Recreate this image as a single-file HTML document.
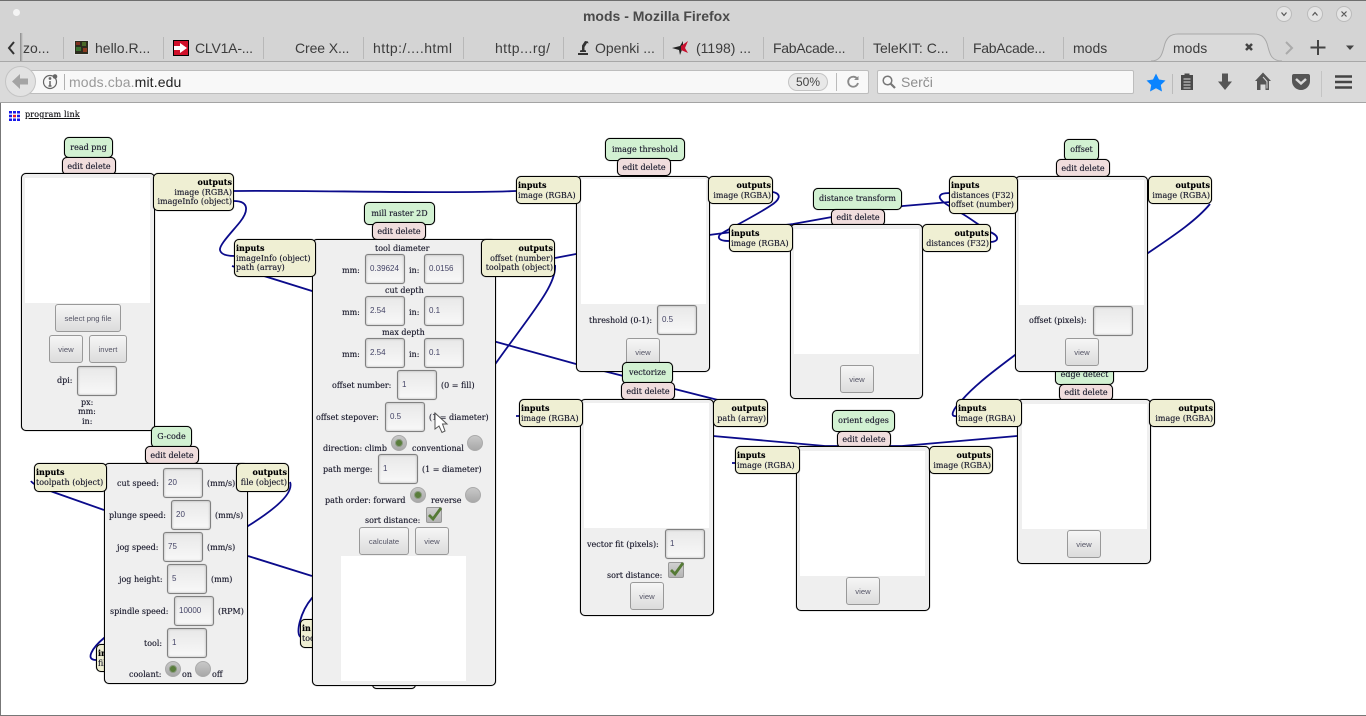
<!DOCTYPE html>
<html><head><meta charset="utf-8"><title>mods - Mozilla Firefox</title>
<style>
html,body{margin:0;padding:0;width:1366px;height:716px;overflow:hidden;background:#fff}
#r{position:relative;width:1366px;height:716px;overflow:hidden;background:#fff}
#r div,#r span.a,#r svg{position:absolute}
.c{font:14px/18px "Liberation Sans",sans-serif;color:#3c3c3c;white-space:nowrap;position:absolute}
.b{box-sizing:border-box;border:1px solid #000;border-radius:5px;box-shadow:0 0 .7px #000}
.m{background:#efefef}.ti{background:#d2f1d2;text-align:center}.ed{background:#f0dddd;text-align:center}
.io{background:#efefd3;font:8px/9.6px "DejaVu Serif",serif;color:#223;padding:4px 1px 0;white-space:nowrap;text-shadow:0 0 .4px #334}
.io b{color:#000}.o{text-align:right}
.ti,.ed{font:8px/19px "DejaVu Serif",serif;color:#223;white-space:nowrap;text-shadow:0 0 .4px #334}
.w{background:#fff}
.t{font:8px/10px "DejaVu Serif",serif;color:#223;white-space:nowrap;position:absolute;margin-top:1px;text-shadow:0 0 .4px #334}
.in{box-sizing:border-box;width:40px;height:30px;border:1px solid #808080;border-radius:3px;background:linear-gradient(#e8e8e8,#f8f8f8);font:8px/28px "Liberation Sans",sans-serif;color:#446;padding-left:4px;box-shadow:inset 0 0 2px #aaa,0 0 .6px #777}
.bt{box-sizing:border-box;height:28px;border:1px solid #999;border-radius:3px;background:linear-gradient(#f6f6f6,#dcdcdc);font:7.7px/28px "Liberation Sans",sans-serif;color:#556;text-align:center;white-space:nowrap}
.ra{box-sizing:border-box;width:16px;height:16px;border-radius:50%;border:1px solid #aaa;background:linear-gradient(#c8c8c8,#a8a8a8)}
.ra.on:after{content:"";position:absolute;left:3px;top:3px;width:8px;height:8px;border-radius:50%;background:#5a7d3c;border:1px solid #8a9a80;box-sizing:border-box}
.ck{box-sizing:border-box;width:16px;height:16px;border-radius:2px;border:1px solid #999;background:linear-gradient(#d0d0d0,#b4b4b4)}
</style></head><body><div id="r">

<!-- chrome -->
<div style="left:0;top:0;width:1366px;height:103px;background:#d4d4d4"></div>
<div style="left:0;top:0;width:1366px;height:1px;background:#6e6e6e"></div>
<div style="left:0;top:62px;width:1366px;height:40px;background:#dadada"></div>
<div style="left:0;top:61px;width:1366px;height:1px;background:#a8a8a8"></div>
<div style="left:0;top:102px;width:1366px;height:1px;background:#a4a4a4"></div>
<div style="left:13px;top:9px;width:7px;height:7px;border-radius:50%;background:#f4f4f4"></div>
<div class="c" style="left:0;width:1313px;top:7px;text-align:center;font-weight:bold;font-size:14px;color:#4a4a4a">mods - Mozilla Firefox</div>

<div style="left:1276px;top:6px;width:16px;height:16px;border-radius:50%;background:#e4e4e4;border:1px solid #bbb;box-sizing:border-box"></div>
<div style="left:1307px;top:6px;width:16px;height:16px;border-radius:50%;background:#e4e4e4;border:1px solid #bbb;box-sizing:border-box"></div>
<div style="left:1336px;top:6px;width:16px;height:16px;border-radius:50%;background:#e4e4e4;border:1px solid #bbb;box-sizing:border-box"></div>
<svg style="left:1276px;top:6px" width="80" height="16" fill="none" stroke="#555" stroke-width="1.2"><path d="M5.5 6.5L8 9.5L10.500 6.5M36.500 9.500L39 6.500L41.500 9.500M65.500 5.500L70.500 10.500M70.500 5.500L65.500 10.500"/></svg>

<!-- tab strip -->
<svg style="left:0;top:33px" width="1366" height="30">
<path d="M1151 28C1160 28 1162 22 1164 14C1166 5 1170 1 1178 1H1254C1262 1 1266 5 1268 14C1270 22 1272 28 1282 28" fill="#dadada" stroke="#a8a8a8"/>
<g fill="#b8b8b8"><rect x="63" y="4" width="1" height="22"/><rect x="163" y="4" width="1" height="22"/><rect x="263" y="4" width="1" height="22"/><rect x="363" y="4" width="1" height="22"/><rect x="463" y="4" width="1" height="22"/><rect x="563" y="4" width="1" height="22"/><rect x="663" y="4" width="1" height="22"/><rect x="763" y="4" width="1" height="22"/><rect x="863" y="4" width="1" height="22"/><rect x="963" y="4" width="1" height="22"/><rect x="1063" y="4" width="1" height="22"/></g>
<path d="M14 9L9 15L14 21" fill="none" stroke="#333" stroke-width="2"/>
<path d="M1286 9L1292 15L1286 21" fill="none" stroke="#aaa" stroke-width="2"/>
<path d="M1318 7V22M1310.500 14.500H1325.500" stroke="#444" stroke-width="2"/>
<path d="M1346 12.500H1354L1350 17Z" fill="#444"/>
<path d="M1246 11L1252 17M1252 11L1246 17" stroke="#444" stroke-width="2.500"/>
</svg>
<div style="left:20px;top:33px;width:3px;height:28px;background:linear-gradient(90deg,#8a8a8a,#d4d4d4)"></div>

<span class="c" style="left:23px;top:39px">zo...</span>
<div style="left:74px;top:40px;width:15px;height:15px;box-sizing:border-box;background:#2c2c1e;border:1px solid #ddd"></div>
<div style="left:76px;top:42px;width:4px;height:3px;background:#803020"></div><div style="left:82px;top:42px;width:4px;height:4px;background:#4a6a28"></div><div style="left:76px;top:47px;width:5px;height:4px;background:#3a7030"></div><div style="left:83px;top:48px;width:4px;height:4px;background:#8a3a20"></div>
<span class="c" style="left:95px;top:39px">hello.R...</span>
<div style="left:173px;top:40px;width:16px;height:16px;background:#d0102a;border:1px solid #000;box-sizing:border-box"></div>
<svg style="left:173px;top:40px" width="16" height="16"><path d="M1 6H7V3L14 8L7 13V10H1Z" fill="#fff"/></svg>
<span class="c" style="left:195px;top:39px;letter-spacing:-.2px">CLV1A-...</span>
<span class="c" style="left:295px;top:39px;letter-spacing:-.1px">Cree X...</span>
<span class="c" style="left:373px;top:39px;letter-spacing:.45px">http:/....html</span>
<span class="c" style="left:495px;top:39px;letter-spacing:.4px">http...rg/</span>
<svg style="left:576px;top:40px" width="14" height="16"><path d="M2 15H12V13H2ZM4 12H10V10.500L8.500 10V7L11 3L12.500 3.500L12 1.500L9 1L6 5.500L6 10L4 10.500Z" fill="#333"/></svg>
<span class="c" style="left:595px;top:39px">Openki ...</span>
<svg style="left:672px;top:40px" width="17" height="16"><path d="M0 8L8 6L11 1L11 7L8 15L7 10Z" fill="#222"/><path d="M9 6L16 1L13 8L16 13L9 10Z" fill="#c8102e"/></svg>
<span class="c" style="left:696px;top:39px">(1198) ...</span>
<span class="c" style="left:773px;top:39px;letter-spacing:-.3px">FabAcade...</span>
<span class="c" style="left:873px;top:39px">TeleKIT: C...</span>
<span class="c" style="left:973px;top:39px;letter-spacing:-.3px">FabAcade...</span>
<span class="c" style="left:1073px;top:39px">mods</span>
<span class="c" style="left:1173px;top:39px">mods</span>

<!-- nav bar -->
<div style="left:20px;top:70px;width:849px;height:24px;box-sizing:border-box;background:#f8f8f8;border:1px solid #bdbdbd;border-radius:2px"></div>
<div style="left:5px;top:66px;width:31px;height:31px;box-sizing:border-box;border-radius:50%;background:#e2e2e2;border:1px solid #c4c4c4"></div>
<svg style="left:5px;top:66px" width="31" height="31"><path d="M7 15.500L15 8V12.500H23V18.500H15V23Z" fill="#a4a4a4"/></svg>
<svg style="left:42px;top:72px" width="18" height="20" fill="none" stroke="#666" stroke-width="1.200"><circle cx="8" cy="10" r="6.500"/><path d="M8 9V14M6.500 14H9.500" stroke-width="1.500"/><circle cx="8" cy="6.500" r=".8" fill="#666"/><circle cx="13" cy="4.500" r="2.300" fill="#666" stroke="none"/></svg>
<div style="left:64px;top:74px;width:1px;height:16px;background:#b0b0b0"></div>
<span class="c" style="left:69px;top:73px;color:#9a9a9a;letter-spacing:.12px">mods.cba.<span style="color:#222">mit.edu</span></span>
<div style="left:788px;top:73px;width:40px;height:18px;box-sizing:border-box;border-radius:9px;background:#e8e8e8;border:1px solid #c4c4c4;text-align:center;font:12px/16px 'Liberation Sans',sans-serif;color:#444">50%</div>
<div style="left:836px;top:73px;width:1px;height:18px;background:#bbb"></div>
<svg style="left:846px;top:75px" width="14" height="14" fill="none" stroke="#8a8a8a" stroke-width="1.800"><path d="M11 3.500A5 5 0 1 0 12 8"/><path d="M8 5H12.500V1Z" fill="#8a8a8a" stroke="none"/></svg>
<div style="left:877px;top:70px;width:257px;height:24px;box-sizing:border-box;background:#f8f8f8;border:1px solid #bdbdbd;border-radius:2px"></div>
<svg style="left:881px;top:74px" width="16" height="16" fill="none" stroke="#777" stroke-width="1.500"><circle cx="6.500" cy="6.500" r="4.300"/><path d="M9.500 9.500L14 14" stroke-width="2.200"/></svg>
<span class="c" style="left:901px;top:73px;color:#8e8e8e">Serči</span>

<svg style="left:1145px;top:70px" width="221" height="30">
<path d="M11 3.500L14 9.500L20.500 10.500L15.800 15L17 21.500L11 18.300L5 21.500L6.200 15L1.500 10.500L8 9.500Z" fill="#0a84ff"/>
<rect x="27" y="4" width="1" height="20" fill="#bbb"/>
<path d="M36 5H39.500V3.500H44.500V5H48V20H36Z" fill="#4a4a4a"/><path d="M38.500 9H45.500M38.500 12H45.500M38.500 15H45.500M38.500 18H45.500" stroke="#ddd"/>
<path d="M77 3.500H83V11.500H87L80 20L73 11.500H77Z" fill="#555"/>
<path d="M118 2.500L126 11H124V20H120.500V14.500H115.500V20H112V11H110Z" fill="#555"/><path d="M118 7L122 11.500V18.500" fill="none" stroke="#dadada" stroke-width="1"/>
<path d="M149 4H163C164.500 4 165 5 165 6V11C165 16 161 20 156 20C151 20 147 16 147 11V6C147 5 147.500 4 149 4Z" fill="#555"/><path d="M151 9L156 13.500L161 9" fill="none" stroke="#dadada" stroke-width="2.500"/>
<rect x="176" y="1" width="1" height="26" fill="#c4c4c4"/>
<path d="M190 6.500H207M190 12H207M190 17.500H207" stroke="#444" stroke-width="2.600"/>
</svg>

<!-- page -->
<div style="left:0;top:103px;width:1px;height:613px;background:#777"></div>
<div style="left:0;top:715px;width:1366px;height:1px;background:#777"></div>
<svg style="left:9px;top:111px" width="11" height="10"><path d="M0 0h3v2.500H0zM4 0h3v2.500H4zM8 0h3v2.500H8zM0 3.800h3v2.500H0zM8 3.800h3v2.500H8zM0 7.500h3v2.500H0zM4 7.500h3v2.500H4zM8 7.500h3v2.500H8z" fill="#1a1ae8"/><path d="M4 3.800h3v2.500H4z" fill="#e01a30"/></svg>
<span class="t" style="left:25px;top:109px;text-decoration:underline;color:#111;letter-spacing:.18px">program link</span>

<!-- wires -->
<svg style="left:0;top:0;z-index:0" width="1366" height="716" fill="none" stroke="#0b0b8b" stroke-width="1.800">
<path d="M234 191C300 190 450 194 516 191"/>
<path d="M234 201C250 201 248 212 240 222C232 232 219 245 220 250C221 255 228 256 235 256"/>
<path d="M232 266L312 291L576 364L718 400"/>
<path d="M555 258L576 254L709 235L793 224L832 217L903 206L950 202"/>
<path d="M773 192C782 194 780 200 770 206C758 214 735 226 724 232C716 236 717 241 729 241"/>
<path d="M990 242C999 242 1000 236 990 232C980 226 970 218 961 213C945 204 935 198 942 194C945 193 948 193 950 193"/>
<path d="M1210 204C1195 222 1170 238 1148 253L1015 355C995 370 975 385 962 400C952 410 950 417 956 416"/>
<path d="M713 436L825 446L902 446L1017 436"/>
<path d="M31 481C33 485 45 489 53 492L104 510M248 556L312 576"/>
<path d="M555 265C557 285 530 315 496 363L312 598C300 612 295 635 301 637"/>
<path d="M290 482C293 490 285 503 248 526L104 638C92 648 85 660 96 660"/>
<path d="M516 416H522M732 463H738"/>
</svg>

<!-- read png -->
<div class="b ti" style="left:64px;top:137px;width:49px;height:21px">read png</div>
<div class="b ed" style="left:62px;top:157px;width:54px;height:18px;line-height:18px">edit delete</div>
<div class="b m" style="left:21px;top:173px;width:134px;height:258px"></div>
<div class="w" style="left:25px;top:178px;width:125px;height:125px"></div>
<div class="bt" style="left:55px;top:304px;width:66px">select png file</div>
<div class="bt" style="left:49px;top:335px;width:34px">view</div>
<div class="bt" style="left:89px;top:335px;width:38px">invert</div>
<span class="t" style="left:57px;top:375px">dpi:</span>
<div class="in" style="left:77px;top:366px"></div>
<span class="t" style="left:81px;top:397px">px:</span>
<span class="t" style="left:78px;top:406px">mm:</span>
<span class="t" style="left:82px;top:416px">in:</span>
<div class="b io o" style="left:153px;top:173px;width:81px;height:38px"><b>outputs</b><br>image (RGBA)<br>imageInfo (object)</div>

<!-- hidden nodes -->
<div class="b io" style="left:96px;top:644px;width:20px;height:28px"><b>in</b><br>fil</div>
<div class="b io" style="left:300px;top:619px;width:20px;height:29px"><b>in</b><br>too</div>
<div class="b" style="left:372px;top:680px;width:44px;height:9px;background:#efefef"></div>

<!-- G-code -->
<div class="b ti" style="left:151px;top:426px;width:41px;height:22px">G-code</div>
<div class="b ed" style="left:145px;top:446px;width:54px;height:18px;line-height:18px">edit delete</div>
<div class="b m" style="left:104px;top:463px;width:144px;height:221px"></div>
<div class="b io" style="left:34px;top:463px;width:73px;height:29px"><b>inputs</b><br>toolpath (object)</div>
<div class="b io o" style="left:236px;top:463px;width:53px;height:29px"><b>outputs</b><br>file (object)</div>
<span class="t" style="left:117px;top:478px">cut speed:</span><div class="in" style="left:163px;top:468px">20</div><span class="t" style="left:207px;top:478px">(mm/s)</span>
<span class="t" style="left:109px;top:510px">plunge speed:</span><div class="in" style="left:171px;top:500px">20</div><span class="t" style="left:215px;top:510px">(mm/s)</span>
<span class="t" style="left:117px;top:542px">jog speed:</span><div class="in" style="left:163px;top:532px">75</div><span class="t" style="left:207px;top:542px">(mm/s)</span>
<span class="t" style="left:119px;top:574px">jog height:</span><div class="in" style="left:167px;top:564px">5</div><span class="t" style="left:211px;top:574px">(mm)</span>
<span class="t" style="left:110px;top:606px">spindle speed:</span><div class="in" style="left:174px;top:596px">10000</div><span class="t" style="left:218px;top:606px">(RPM)</span>
<span class="t" style="left:144px;top:638px">tool:</span><div class="in" style="left:167px;top:628px">1</div>
<span class="t" style="left:129px;top:669px">coolant:</span><div class="ra on" style="left:165px;top:661px"></div><span class="t" style="left:182px;top:669px">on</span><div class="ra" style="left:195px;top:661px"></div><span class="t" style="left:212px;top:669px">off</span>

<!-- mill raster -->
<div class="b ti" style="left:364px;top:202px;width:71px;height:23px;line-height:21px">mill raster 2D</div>
<div class="b ed" style="left:372px;top:222px;width:54px;height:18px;line-height:18px">edit delete</div>
<div class="b m" style="left:312px;top:239px;width:184px;height:447px"></div>
<div class="b io" style="left:234px;top:239px;width:82px;height:38px"><b>inputs</b><br>imageInfo (object)<br>path (array)</div>
<div class="b io o" style="left:481px;top:239px;width:74px;height:38px"><b>outputs</b><br>offset (number)<br>toolpath (object)</div>
<span class="t" style="left:375px;top:243px">tool diameter</span>
<span class="t" style="left:342px;top:265px">mm:</span><div class="in" style="left:365px;top:254px">0.39624</div><span class="t" style="left:409px;top:265px">in:</span><div class="in" style="left:424px;top:254px">0.0156</div>
<span class="t" style="left:385px;top:285px">cut depth</span>
<span class="t" style="left:342px;top:307px">mm:</span><div class="in" style="left:365px;top:296px">2.54</div><span class="t" style="left:409px;top:307px">in:</span><div class="in" style="left:424px;top:296px">0.1</div>
<span class="t" style="left:382px;top:327px">max depth</span>
<span class="t" style="left:342px;top:349px">mm:</span><div class="in" style="left:365px;top:338px">2.54</div><span class="t" style="left:409px;top:349px">in:</span><div class="in" style="left:424px;top:338px">0.1</div>
<span class="t" style="left:332px;top:380px">offset number:</span><div class="in" style="left:397px;top:370px">1</div><span class="t" style="left:441px;top:380px">(0 = fill)</span>
<span class="t" style="left:316px;top:412px">offset stepover:</span><div class="in" style="left:385px;top:402px">0.5</div><span class="t" style="left:429px;top:412px">(1 = diameter)</span>
<span class="t" style="left:323px;top:443px">direction: climb</span><div class="ra on" style="left:391px;top:435px"></div><span class="t" style="left:412px;top:443px">conventional</span><div class="ra" style="left:467px;top:435px"></div>
<span class="t" style="left:323px;top:464px">path merge:</span><div class="in" style="left:378px;top:454px">1</div><span class="t" style="left:422px;top:464px">(1 = diameter)</span>
<span class="t" style="left:325px;top:495px">path order: forward</span><div class="ra on" style="left:410px;top:487px"></div><span class="t" style="left:431px;top:495px">reverse</span><div class="ra" style="left:465px;top:487px"></div>
<span class="t" style="left:365px;top:515px">sort distance:</span><div class="ck" style="left:426px;top:507px"></div>
<svg style="left:426px;top:505px" width="18" height="18"><path d="M3 10L7 14L15 3" fill="none" stroke="#557a35" stroke-width="2.800"/></svg>
<div class="bt" style="left:359px;top:527px;width:50px">calculate</div>
<div class="bt" style="left:415px;top:527px;width:34px">view</div>
<div class="w" style="left:341px;top:556px;width:125px;height:125px"></div>
<svg style="left:432px;top:411px" width="18" height="24"><path d="M3 2L15 13H10.500L13 20L10 21.500L7 15L3 18Z" fill="#fff" stroke="#555" stroke-width="1"/></svg>

<!-- image threshold -->
<div class="b ti" style="left:605px;top:138px;width:80px;height:23px;line-height:21px">image threshold</div>
<div class="b ed" style="left:617px;top:158px;width:54px;height:18px;line-height:18px">edit delete</div>
<div class="b m" style="left:576px;top:176px;width:134px;height:196px"></div>
<div class="w" style="left:581px;top:179px;width:125px;height:125px"></div>
<span class="t" style="left:589px;top:315px">threshold (0-1):</span><div class="in" style="left:657px;top:305px">0.5</div>
<div class="bt" style="left:626px;top:338px;width:34px">view</div>
<div class="b io" style="left:516px;top:176px;width:65px;height:28px"><b>inputs</b><br>image (RGBA)</div>
<div class="b io o" style="left:708px;top:176px;width:65px;height:28px"><b>outputs</b><br>image (RGBA)</div>

<!-- distance transform -->
<div class="b ti" style="left:813px;top:188px;width:89px;height:22px;line-height:20px">distance transform</div>
<div class="b ed" style="left:831px;top:209px;width:54px;height:17px;line-height:15px">edit delete</div>
<div class="b m" style="left:790px;top:224px;width:133px;height:175px"></div>
<div class="w" style="left:794px;top:229px;width:125px;height:125px"></div>
<div class="bt" style="left:840px;top:365px;width:34px">view</div>
<div class="b io" style="left:729px;top:224px;width:64px;height:28px"><b>inputs</b><br>image (RGBA)</div>
<div class="b io o" style="left:922px;top:224px;width:69px;height:28px"><b>outputs</b><br>distances (F32)</div>

<!-- edge detect -->
<div class="b ti" style="left:1055px;top:364px;width:59px;height:21px;line-height:19px">edge detect</div>
<div class="b ed" style="left:1059px;top:384px;width:54px;height:17px;line-height:15px">edit delete</div>
<div class="b m" style="left:1017px;top:399px;width:134px;height:165px"></div>
<div class="w" style="left:1022px;top:404px;width:125px;height:125px"></div>
<div class="bt" style="left:1067px;top:530px;width:34px">view</div>
<div class="b io" style="left:956px;top:399px;width:66px;height:28px"><b>inputs</b><br>image (RGBA)</div>
<div class="b io o" style="left:1149px;top:399px;width:66px;height:28px"><b>outputs</b><br>image (RGBA)</div>

<!-- offset -->
<div class="b ti" style="left:1064px;top:139px;width:35px;height:22px;line-height:20px">offset</div>
<div class="b ed" style="left:1056px;top:159px;width:54px;height:18px;line-height:18px">edit delete</div>
<div class="b m" style="left:1015px;top:176px;width:133px;height:196px"></div>
<div class="w" style="left:1019px;top:180px;width:125px;height:125px"></div>
<span class="t" style="left:1029px;top:315px">offset (pixels):</span><div class="in" style="left:1093px;top:306px"></div>
<div class="bt" style="left:1065px;top:338px;width:34px">view</div>
<div class="b io" style="left:949px;top:176px;width:69px;height:38px"><b>inputs</b><br>distances (F32)<br>offset (number)</div>
<div class="b io o" style="left:1148px;top:176px;width:64px;height:28px"><b>outputs</b><br>image (RGBA)</div>

<!-- vectorize -->
<div class="b ti" style="left:622px;top:362px;width:51px;height:22px;line-height:20px">vectorize</div>
<div class="b ed" style="left:621px;top:382px;width:54px;height:18px;line-height:18px">edit delete</div>
<div class="b m" style="left:580px;top:399px;width:134px;height:217px"></div>
<div class="w" style="left:584px;top:403px;width:125px;height:125px"></div>
<span class="t" style="left:587px;top:539px">vector fit (pixels):</span><div class="in" style="left:665px;top:529px">1</div>
<span class="t" style="left:607px;top:570px">sort distance:</span><div class="ck" style="left:668px;top:562px"></div>
<svg style="left:668px;top:560px" width="18" height="18"><path d="M3 10L7 14L15 3" fill="none" stroke="#557a35" stroke-width="2.800"/></svg>
<div class="bt" style="left:630px;top:582px;width:34px">view</div>
<div class="b io" style="left:519px;top:399px;width:64px;height:28px"><b>inputs</b><br>image (RGBA)</div>
<div class="b io o" style="left:713px;top:399px;width:55px;height:28px"><b>outputs</b><br>path (array)</div>

<!-- orient edges -->
<div class="b ti" style="left:832px;top:410px;width:63px;height:22px;line-height:20px">orient edges</div>
<div class="b ed" style="left:837px;top:431px;width:54px;height:17px;line-height:15px">edit delete</div>
<div class="b m" style="left:796px;top:446px;width:134px;height:165px"></div>
<div class="w" style="left:800px;top:451px;width:125px;height:125px"></div>
<div class="bt" style="left:846px;top:577px;width:34px">view</div>
<div class="b io" style="left:735px;top:446px;width:65px;height:28px"><b>inputs</b><br>image (RGBA)</div>
<div class="b io o" style="left:929px;top:446px;width:64px;height:28px"><b>outputs</b><br>image (RGBA)</div>

</div></body></html>
